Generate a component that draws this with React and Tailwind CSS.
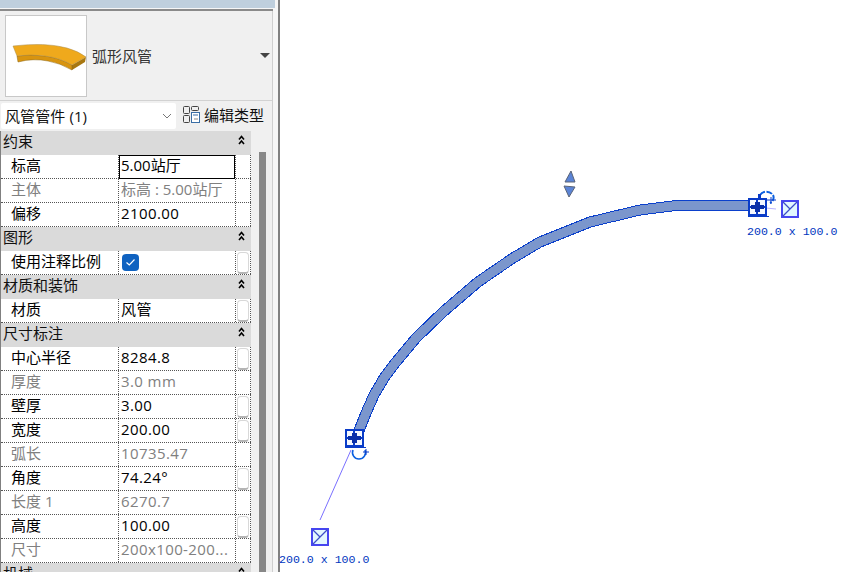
import React from 'react'

const sections = [
  {
    title: '约束',
    rows: [
      { label: '标高', value: '5.00站厅', selected: true, tight: true },
      { label: '主体', value: '标高 : 5.00站厅', off: true, tight: true },
      { label: '偏移', value: '2100.00' },
    ],
  },
  { title: '图形', rows: [{ label: '使用注释比例', check: true, btn: true }] },
  { title: '材质和装饰', rows: [{ label: '材质', value: '风管', btn: true }] },
  {
    title: '尺寸标注',
    rows: [
      { label: '中心半径', value: '8284.8', btn: true },
      { label: '厚度', value: '3.0 mm', off: true },
      { label: '壁厚', value: '3.00', btn: true },
      { label: '宽度', value: '200.00', btn: true },
      { label: '弧长', value: '10735.47', off: true },
      { label: '角度', value: '74.24°', btn: true },
      { label: '长度 1', value: '6270.7', off: true },
      { label: '高度', value: '100.00', btn: true },
      { label: '尺寸', value: '200x100-200...', off: true },
    ],
  },
  { title: '机械', rows: [] },
]

const curve =
  '357,436 360,428 366,413 374,395 384,378 396,362 416,338 443,312 478,282 513,258 540,242 590,222 640,210 680,205 737,205 750,206'

function Collapse() {
  return (
    <svg className="mb-[6px]" width="7" height="10" viewBox="0 0 7 10" fill="none" stroke="#000" strokeWidth="1.6">
      <polyline points="1,4.5 3.5,1.5 6,4.5" />
      <polyline points="1,9 3.5,6 6,9" />
    </svg>
  )
}

function Row({ row }) {
  const tone = row.off ? 'text-[#808080]' : 'text-black'
  const spacing = row.tight ? 'tracking-normal' : 'tracking-[0.4px]'
  return (
    <div className={`grid h-[24px] grid-cols-[118px_117px_15px] border-b border-dotted border-[#555] ${tone}`}>
      <div className="flex items-center border-r border-dotted border-[#555] pl-[10px]">
        <span className="mb-[2px]">{row.label}</span>
      </div>
      <div className={`relative flex items-center border-r border-dotted border-[#555] pl-[2px] ${spacing}`}>
        {row.selected && <div className="absolute inset-x-0 top-0 bottom-[-1px] border border-black" />}
        {row.check ? (
          <span className="ml-[1px] flex h-[17px] w-[17px] items-center justify-center rounded-[4px] bg-[#0f62c0]">
            <svg width="11" height="9" viewBox="0 0 11 9" fill="none" stroke="#fff" strokeWidth="1.2">
              <polyline points="1.5,4.5 4.3,7 9.5,1.5" />
            </svg>
          </span>
        ) : (
          <span className="relative mb-[2px] whitespace-nowrap">{row.value}</span>
        )}
      </div>
      <div className="flex items-center justify-end border-r border-dotted border-[#555] pr-[1px]">
        {row.btn && (
          <div className="h-[22px] w-[12px] rounded-[4px] border border-[#d8d8d8] border-b-2 border-b-[#b4b4b4] bg-white" />
        )}
      </div>
    </div>
  )
}

function PropertyPanel() {
  return (
    <aside className="h-full w-[280px] shrink-0 border-r-2 border-[#808080] bg-[#f6f6f6]">
      <div className="h-[8px] w-[275px] bg-[#bfcfdd]" />
      <div className="mt-[1px] h-[2px] w-[273px] bg-[#8a8a8a]" />
      <div className="h-[561px] w-[273px] overflow-hidden border-r border-[#cfcfcf] bg-[#f0f0f0]">
        <div className="flex h-[90px] items-center border-b border-[#d2d2d2] pl-[5px]">
          <div className="h-[82px] w-[82px] shrink-0 border border-[#c8c8c8] bg-white">
            <svg width="80" height="80" viewBox="6 16 80 80">
              <path d="M72 65 L86 57 L85 62 L72 70 Z" fill="#a87710" />
              <path d="M17 56 Q30 54 45 56 Q60 58 72 65 L72 70 Q60 63 48 61 Q33 58 18 62 Z" fill="#d8940f" stroke="#8a6410" strokeWidth="0.5" />
              <path d="M13 46 Q45 42 67 48 Q78 51 86 57 L72 65 Q60 58 45 56 Q30 54 17 56 Z" fill="#efa91c" stroke="#a88a48" strokeWidth="0.5" />
            </svg>
          </div>
          <span className="ml-[5px] mt-[1px] text-[#333]">弧形风管</span>
          <svg className="ml-auto mr-[2px]" width="10" height="5" viewBox="0 0 10 5">
            <polygon points="0,0 10,0 5,5" fill="#444" />
          </svg>
        </div>
        <div className="flex h-[30px] items-start pt-[2px]">
          <div className="ml-[1px] flex h-[26px] w-[175px] items-center justify-between rounded-[2px] bg-white pl-[4px] pr-[4px] text-[#111]">
            <span className="tracking-[0.1px]">风管管件 (1)</span>
            <svg width="10" height="6" viewBox="0 0 10 6" fill="none" stroke="#777" strokeWidth="1">
              <polyline points="1,1 5,5 9,1" />
            </svg>
          </div>
          <svg className="ml-[7px] mt-[3px]" width="17" height="17" viewBox="0 0 17 17" fill="none" stroke="#444" strokeWidth="1">
            <rect x="0.5" y="0.5" width="6" height="7" rx="1" />
            <rect x="8.5" y="0.5" width="7" height="4" rx="1" />
            <rect x="0.5" y="9.5" width="6" height="7" rx="1" />
            <rect x="8.5" y="6.5" width="8" height="10" fill="#fff" stroke="#3a6ea5" />
            <line x1="10" y1="9" x2="15" y2="9" stroke="#3a6ea5" />
            <line x1="11" y1="13" x2="15" y2="13" stroke="#888" />
          </svg>
          <span className="ml-[4px] mt-[5px] text-[#111]">编辑类型</span>
        </div>
        <div className="flex">
          <div className="w-[251px] shrink-0 border-l border-[#808080]">
            {sections.map((s) => (
              <div key={s.title}>
                <div className="flex h-[24px] items-center justify-between bg-[#dadada] pl-[2px] pr-[6px] text-[#111]">
                  <span className="mb-[3px]">{s.title}</span>
                  <Collapse />
                </div>
                {s.rows.map((r) => (
                  <div key={r.label} className="bg-white">
                    <Row row={r} />
                  </div>
                ))}
              </div>
            ))}
          </div>
          <div className="ml-[8px] mt-[21px] h-[500px] w-[7px] bg-[#888]" />
        </div>
      </div>
    </aside>
  )
}

function PortBox({ x, y }) {
  return (
    <g shapeRendering="crispEdges">
      <rect x={x} y={y} width="17" height="16" fill="#f4f8ff" stroke="#0a3cc8" strokeWidth="2" />
      <line x1={x + 8.5} y1={y} x2={x + 8.5} y2={y + 16} stroke="#0a3cc8" strokeWidth="2" />
      <line x1={x} y1={y + 8} x2={x + 17} y2={y + 8} stroke="#0a3cc8" strokeWidth="2" />
      <rect x={x + 2} y={y + 6} width="13" height="4" fill="#0a2fa8" />
      <rect x={x + 6} y={y + 3} width="5" height="10" fill="#0a2fa8" />
      <line x1={x - 1} y1={y + 18} x2={x + 20} y2={y + 18} stroke="#0a3cc8" strokeWidth="1" />
    </g>
  )
}

function DuctEnd({ x, y }) {
  return (
    <g>
      <rect x={x + 1} y={y + 1} width="16" height="16" fill="#e2f7ff" stroke="#4646f0" strokeWidth="2" />
      <line x1={x + 2} y1={y + 16} x2={x + 16} y2={y + 2} stroke="#3c4ec8" strokeWidth="1.2" />
      <line x1={x + 2} y1={y + 2} x2={x + 9} y2={y + 9} stroke="#3c4ec8" strokeWidth="1.2" />
    </g>
  )
}

function Drawing() {
  return (
    <svg className="absolute inset-0" width="575" height="572" viewBox="280 0 575 572" fill="none">
      <polyline points={curve} stroke="#0b40cc" strokeWidth="11" strokeLinejoin="round" shapeRendering="crispEdges" />
      <polyline points={curve} stroke="#7b96cc" strokeWidth="9" strokeLinejoin="round" shapeRendering="crispEdges" />

      <polygon points="571,171 565,182 575,182" fill="#5b84d6" stroke="#5a6478" strokeWidth="1" />
      <polygon points="564,186 575,187 569,197" fill="#5b84d6" stroke="#5a6478" strokeWidth="1" />

      <line x1="351" y1="450" x2="320" y2="520" stroke="#7a70ff" strokeWidth="1" />
      <PortBox x={345.5} y={429.5} />
      <path d="M353 450 A6.5 6.5 0 1 0 365 450" stroke="#0a5fe0" strokeWidth="1.6" />
      <path d="M363 452 H369 M366 449 V455" stroke="#0a3cc8" strokeWidth="1" />
      <DuctEnd x={311} y={528} />

      <line x1="766" y1="208" x2="776" y2="209" stroke="#b9b4ff" strokeWidth="1" />
      <PortBox x={748.5} y={198.5} />
      <path d="M760 195 A8 8 0 0 1 773 195 A6 6 0 0 1 770 203" stroke="#0a5fe0" strokeWidth="2" strokeDasharray="6 1.5" />
      <path d="M767 200 H776 M771 197 V204" stroke="#0a3cc8" strokeWidth="1" />
      <rect x="758" y="194" width="3" height="4" fill="#0a3cc8" />
      <DuctEnd x={781} y={200} />
    </svg>
  )
}

function Tag({ className }) {
  return (
    <span className={`absolute whitespace-nowrap font-['Liberation_Mono',monospace] text-[11.6px] leading-[14px] text-[#0036c0] ${className}`}>
      200.0 x 100.0
    </span>
  )
}

export default function App() {
  return (
    <div className="flex h-[572px] w-[855px] overflow-hidden bg-white font-['Open_Sans','Noto_Sans_CJK_SC',sans-serif] text-[15px] leading-none">
      <PropertyPanel />
      <main className="relative flex-1">
        <Drawing />
        <Tag className="left-[467px] top-[225px]" />
        <Tag className="left-[-1px] top-[553px]" />
      </main>
    </div>
  )
}
